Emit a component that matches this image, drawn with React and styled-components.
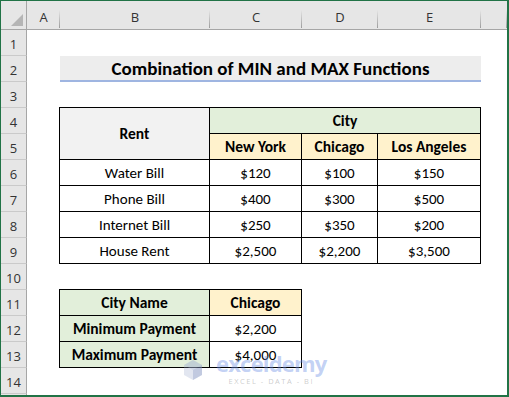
import React from 'react';
import styled, { createGlobalStyle } from 'styled-components';

const GlobalStyle = createGlobalStyle`
  html, body {
    margin: 0;
    padding: 0;
    background: #fff;
  }
  body {
    font-family: Carlito, Lato, 'Liberation Sans', sans-serif;
  }
`;

const Frame = styled.div`
  position: relative;
  width: 509px;
  height: 397px;
  box-sizing: border-box;
  border: 2px solid #217346;
  border-top-width: 1px;
  border-left-width: 1px;
  overflow: hidden;
  background: #fff;
`;

const Sheet = styled.div`
  display: grid;
  grid-template-columns: 26px 33px 150px 92px 76px 103px 1fr;
  grid-template-rows: 29px repeat(15, 26px);
`;

const Corner = styled.div`
  position: relative;
  grid-column: 1;
  grid-row: 1;
  background: #e6e6e6;
  border-right: 1px solid #a6a6a6;
  border-bottom: 1px solid #a6a6a6;
  box-sizing: border-box;

  &::after {
    content: '';
    position: absolute;
    right: 3px;
    bottom: 3px;
    width: 12px;
    height: 12px;
    background: #b5b5b5;
    clip-path: polygon(100% 0, 100% 100%, 0 100%);
  }
`;

const ColHead = styled.div`
  position: relative;
  grid-column: ${(p) => p.$col};
  grid-row: 1;
  display: flex;
  align-items: center;
  justify-content: center;
  padding-top: 3px;
  box-sizing: border-box;
  background: #e6e6e6;
  border-bottom: 1px solid #a6a6a6;
  font-family: 'Open Sans', 'Noto Sans', sans-serif;
  font-size: 13px;
  color: #333;

  &::after {
    content: '';
    position: absolute;
    right: 0;
    top: 9px;
    bottom: 1px;
    width: 1px;
    background: linear-gradient(#e6e6e6, #9c9c9c);
  }
`;

const RowHead = styled.div`
  grid-column: 1;
  grid-row: ${(p) => p.$row};
  display: flex;
  align-items: center;
  justify-content: center;
  padding-top: 2px;
  box-sizing: border-box;
  background: #e6e6e6;
  border-right: 1px solid #a6a6a6;
  border-bottom: 1px solid #cacaca;
  font-family: 'Open Sans', 'Noto Sans', sans-serif;
  font-size: 13px;
  color: #333;
`;

const Title = styled.div`
  grid-column: 3 / 7;
  grid-row: 3;
  display: flex;
  align-items: center;
  justify-content: center;
  box-sizing: border-box;
  background: #ededed;
  border-bottom: 2px solid #9fb5e1;
  font-size: 19px;
  font-weight: 700;
  color: #000;
`;

const fills = {
  white: '#ffffff',
  gray: '#f2f2f2',
  green: '#e2efda',
  yellow: '#fff2cc',
};

const Cell = styled.div`
  grid-column: ${(p) => p.$col};
  grid-row: ${(p) => p.$row};
  display: flex;
  align-items: center;
  justify-content: center;
  box-sizing: border-box;
  background: ${(p) => fills[p.$fill || 'white']};
  border-right: 1px solid #000;
  border-bottom: 1px solid #000;
  border-top: ${(p) => (p.$top ? '1px solid #000' : 'none')};
  border-left: ${(p) => (p.$left ? '1px solid #000' : 'none')};
  margin-top: ${(p) => (p.$top ? '-1px' : '0')};
  margin-left: ${(p) => (p.$left ? '-1px' : '0')};
  font-size: ${(p) => (p.$bold ? '15.5px' : '15px')};
  font-weight: ${(p) => (p.$bold ? 700 : 400)};
  color: #000;
  white-space: nowrap;
`;

const Watermark = styled.div`
  position: absolute;
  left: 181px;
  top: 352px;
  display: flex;
  align-items: center;
  gap: 12px;
  pointer-events: none;
`;

const Brand = styled.div`
  display: flex;
  flex-direction: column;
  align-items: center;
`;

const BrandName = styled.div`
  font-family: 'Open Sans', sans-serif;
  font-size: 22px;
  font-weight: 700;
  line-height: 21px;
  letter-spacing: -0.8px;
  color: rgba(110, 145, 230, 0.42);
`;

const Tagline = styled.div`
  margin-top: 2px;
  font-family: 'Open Sans', sans-serif;
  font-size: 7.5px;
  letter-spacing: 1.5px;
  color: rgba(140, 140, 140, 0.45);
`;

const columns = ['A', 'B', 'C', 'D', 'E', ''];

const bills = [
  ['Water Bill', '$120', '$100', '$150'],
  ['Phone Bill', '$400', '$300', '$500'],
  ['Internet Bill', '$250', '$350', '$200'],
  ['House Rent', '$2,500', '$2,200', '$3,500'],
];

const Logo = () => (
  <svg width="22" height="22" viewBox="0 0 22 22">
    <polygon points="11,1 20,6 20,16 11,21 2,16 2,6" fill="rgba(150,165,200,0.28)" />
    <polygon points="11,1 20,6 11,11 2,6" fill="rgba(170,185,215,0.3)" />
    <polygon points="11,11 20,6 20,16 11,21" fill="rgba(120,140,190,0.3)" />
  </svg>
);

export default function App() {
  return (
    <>
      <GlobalStyle />
      <Frame>
        <Sheet>
          <Corner />
          {columns.map((c, i) => (
            <ColHead key={i} $col={i + 2}>
              {c}
            </ColHead>
          ))}
          {Array.from({ length: 15 }, (_, i) => (
            <RowHead key={i} $row={i + 2}>
              {i < 14 ? i + 1 : ''}
            </RowHead>
          ))}

          <Title>Combination of MIN and MAX Functions</Title>

          <Cell $col="3" $row="5 / 7" $fill="gray" $bold $top $left>
            Rent
          </Cell>
          <Cell $col="4 / 7" $row="5" $fill="green" $bold $top>
            City
          </Cell>
          {['New York', 'Chicago', 'Los Angeles'].map((c, i) => (
            <Cell key={c} $col={i + 4} $row="6" $fill="yellow" $bold>
              {c}
            </Cell>
          ))}
          {bills.map((row, r) =>
            row.map((v, c) => (
              <Cell key={r + '-' + c} $col={c + 3} $row={r + 7} $left={c === 0}>
                {v}
              </Cell>
            ))
          )}

          <Cell $col="3" $row="12" $fill="green" $bold $top $left>
            City Name
          </Cell>
          <Cell $col="4" $row="12" $fill="yellow" $bold $top>
            Chicago
          </Cell>
          <Cell $col="3" $row="13" $fill="green" $bold $left>
            Minimum Payment
          </Cell>
          <Cell $col="4" $row="13">
            $2,200
          </Cell>
          <Cell $col="3" $row="14" $fill="green" $bold $left>
            Maximum Payment
          </Cell>
          <Cell $col="4" $row="14">
            $4,000
          </Cell>
        </Sheet>

        <Watermark>
          <Logo />
          <Brand>
            <BrandName>exceldemy</BrandName>
            <Tagline>EXCEL - DATA - BI</Tagline>
          </Brand>
        </Watermark>
      </Frame>
    </>
  );
}
